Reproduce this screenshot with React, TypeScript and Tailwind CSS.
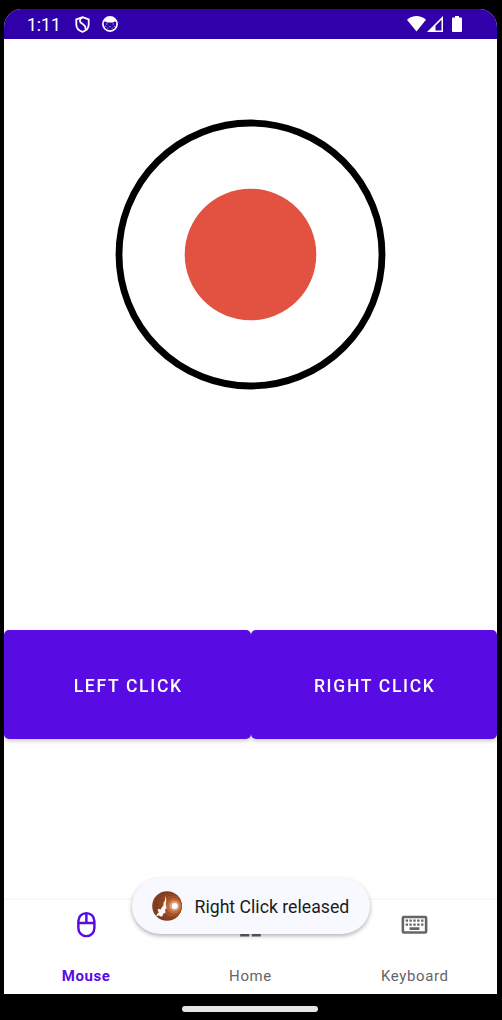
import React from "react";

function StatusBar() {
  return (
    <header className="flex h-[30px] shrink-0 items-center bg-[#3000ab] pl-[23px] pr-[35px] text-white">
      <span className="w-[48px] pt-[2px] text-[17.5px] leading-[30px]">1:11</span>
      <svg className="mt-px h-[17px] w-[15px] shrink-0" viewBox="0 0 15 17" fill="none" stroke="currentColor" strokeWidth="1.800">
        <path d="M7.500 1.100 13.700 3.300V8.500c0 3.500-2.400 6.100-6.200 7.400C3.700 14.600 1.300 12 1.300 8.500V3.300Z" />
        <path d="M7.500 1.200C4 3.200 4.200 5.800 7 7.600c2.900 1.800 4.200 3.600 3.300 6" />
      </svg>
      <svg className="ml-[12px] h-4 w-4 shrink-0" viewBox="0 0 16 16">
        <circle cx="8" cy="8" r="7.100" fill="none" stroke="currentColor" strokeWidth="1.700" />
        <path d="M1.800 5.800C2.800 2.500 5 1 8 1s5.200 1.500 6.200 4.800L12.800 5.500l-2 .9H5.200l-2-.9Z" fill="currentColor" />
        <path d="M4.200 8h1.200M10.600 8h1.200M3.200 10.300h1M5.400 12.200h1M7.500 10.600h1M9.600 12.200h1M11.800 10.300h1" stroke="currentColor" strokeWidth=".8" />
      </svg>
      <svg className="ml-auto h-4 w-[19px] shrink-0" viewBox="0 0 19 16" fill="currentColor">
        <path d="M0 3.800C5.500-1.200 13.500-1.200 19 3.800L9.500 15.500Z" />
      </svg>
      <svg className="ml-px h-4 w-4 shrink-0" viewBox="0 0 16 16">
        <path fillRule="evenodd" d="M0 16 16 0v16ZM8.500 14.500h6V3.800l-6 6Z" fill="currentColor" />
      </svg>
      <svg className="ml-[9px] h-4 w-[10px] shrink-0" viewBox="0 0 10 16" fill="currentColor">
        <path d="M3 0h4v1.600h2q1 0 1 1V15q0 1-1 1H1q-1 0-1-1V2.600q0-1 1-1h2Z" />
      </svg>
    </header>
  );
}

function Joystick() {
  return (
    <div className="mx-auto mt-[80px] shrink-0">
      <svg className="block h-[271px] w-[271px]" viewBox="0 0 271 271">
        <circle cx="135.500" cy="135.500" r="131.500" fill="none" stroke="#000" strokeWidth="6.800" />
        <circle cx="135.500" cy="135.500" r="65.800" fill="#e15241" />
      </svg>
    </div>
  );
}

function ClickButton({ children }: { children: React.ReactNode }) {
  return (
    <button className="h-[109px] flex-1 rounded-[5px] bg-[#580ce3] pl-[2px] pt-[3px] text-[17.5px] font-medium tracking-[1.7px] text-white">
      {children}
    </button>
  );
}

function MouseIcon() {
  return (
    <svg className="size-[31px]" viewBox="0 0 24 24" fill="none" stroke="currentColor" strokeWidth="1.900">
      <rect x="5.700" y="3.200" width="12.400" height="17.800" rx="6.200" />
      <path d="M6 10.800h12M11.900 3v7.800" />
    </svg>
  );
}

function HomeIcon() {
  return (
    <svg className="size-[31px]" viewBox="0 0 24 24" fill="currentColor">
      <path d="M4 3h7v8H4Zm9 0h7v5h-7Zm-9 10h7v8.300H4Zm9-3h7v11.300h-7Z" />
    </svg>
  );
}

function KeyboardIcon() {
  return (
    <svg className="size-[31px]" viewBox="0 0 24 24" fill="currentColor">
      <rect x="3" y="6.200" width="18" height="12" rx=".7" fill="none" stroke="currentColor" strokeWidth="2" />
      <path d="M5.200 8.200H7v1.700H5.200Zm2.900 0h1.800v1.700H8.100Zm3 0h1.800v1.700h-1.800Zm3 0h1.800v1.700h-1.800Zm3 0h1.800v1.700h-1.800ZM5.200 11.200H7v1.700H5.200Zm2.900 0h1.800v1.700H8.100Zm3 0h1.800v1.700h-1.800Zm3 0h1.800v1.700h-1.800Zm3 0h1.800v1.700h-1.800ZM8.200 14.200h7.600v2H8.200Z" />
    </svg>
  );
}

function ToastIcon() {
  return (
    <svg className="size-[30px] shrink-0" viewBox="0 0 30 30">
      <defs>
        <clipPath id="badge"><circle cx="15" cy="15" r="14.800" /></clipPath>
      </defs>
      <g clipPath="url(#badge)">
        <path fill="#7f3e20" d="M0 0h30v30H0z" />
        <circle cx="19" cy="15" r="13" fill="#8d4423" />
        <circle cx="20.500" cy="15" r="10.500" fill="#a75129" />
        <circle cx="22" cy="15" r="7.500" fill="#c06d42" />
        <circle cx="22.500" cy="15" r="5" fill="#dca27f" />
        <circle cx="22.700" cy="15" r="3" fill="#fff" />
        <path fill="#fff" d="m13.500 4.500.8 5-.5 4 .7 4-1.500 1 .5 3-2.300 1.300-.7 2.500-2 .2-1.500-1.300-2.700 1.300.8-2.800 1.700-1-1.300-3.200 1.500-.5 1.800.6 1-2.300 1.700-1.500.1-3 1.400-2Z" />
      </g>
    </svg>
  );
}

function Toast() {
  return (
    <div role="status" className="absolute left-[131.5px] top-[877.5px] flex h-[56px] w-[238px] items-center rounded-full bg-[#f8f9fe] pl-[20px] shadow-[0_2px_4px_rgba(0,0,0,0.3)]">
      <ToastIcon />
      <span className="ml-[13px] mt-[3px] whitespace-nowrap text-[17.7px] text-[#1b1c20]">Right Click released</span>
    </div>
  );
}

function NavItem({ icon, label, active = false }: { icon: React.ReactNode; label: string; active?: boolean }) {
  return (
    <button className={active ? "flex flex-1 flex-col items-center pt-[9px] font-bold text-[#580ce3]" : "flex flex-1 flex-col items-center pt-[9px] text-[#656565]"}>
      {icon}
      <span className="mt-[26px] text-[15px] leading-5 tracking-[0.6px]">{label}</span>
    </button>
  );
}

export default function App() {
  return (
    <div className="relative flex h-[1020px] w-[502px] flex-col bg-black pl-1 pr-[5px] pt-[9px] font-['Roboto',sans-serif]">
      <main className="flex h-[985px] shrink-0 flex-col overflow-hidden rounded-t-[18px] bg-white">
        <StatusBar />
        <Joystick />
        <div className="mt-[240px] flex shrink-0 drop-shadow-[0_2px_2px_rgba(0,0,0,0.2)]">
          <ClickButton>LEFT CLICK</ClickButton>
          <ClickButton>RIGHT CLICK</ClickButton>
        </div>
        <nav className="mt-auto flex h-[94px] shrink-0 bg-white shadow-[0_-1px_2px_rgba(0,0,0,0.06)]">
          <NavItem active icon={<MouseIcon />} label="Mouse" />
          <NavItem icon={<HomeIcon />} label="Home" />
          <NavItem icon={<KeyboardIcon />} label="Keyboard" />
        </nav>
      </main>
      <div className="ml-[178.4px] mt-[12px] h-[5.500px] w-[135.6px] shrink-0 rounded-full bg-[#e6e6e6]" />
      <Toast />
    </div>
  );
}
